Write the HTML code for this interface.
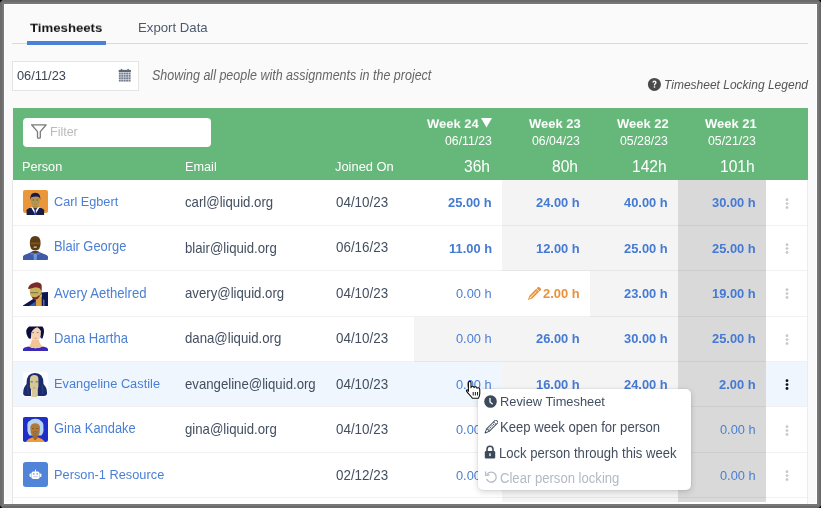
<!DOCTYPE html>
<html><head><meta charset="utf-8"><style>
html,body{margin:0;padding:0;}
body{width:821px;height:508px;overflow:hidden;position:relative;background:#6a6a6a;font-family:"Liberation Sans", sans-serif;}
.t{position:absolute;white-space:nowrap;will-change:transform;}
.r{position:absolute;}
#app{position:absolute;left:4px;top:4px;width:813px;height:500px;background:#fafafa;box-sizing:border-box;border:1px solid #fff;}
</style></head><body>
<div class="r" style="left:2px;top:2px;width:817px;height:504px;background:#777;"></div><div id="app"></div>
<div class="r" style="left:0;top:0;width:3px;height:3px;background:radial-gradient(circle at 3px 3px, transparent 2.5px, #000 3px);"></div>
<div class="r" style="right:0;top:0;width:3px;height:3px;background:radial-gradient(circle at 0 3px, transparent 2.5px, #000 3px);"></div>
<div class="r" style="left:0;bottom:0;width:3px;height:3px;background:radial-gradient(circle at 3px 0, transparent 2.5px, #000 3px);"></div>
<div class="r" style="right:0;bottom:0;width:3px;height:3px;background:radial-gradient(circle at 0 0, transparent 2.5px, #000 3px);"></div>
<div class="t" style="top:21.03px;font-size:13.2px;line-height:13.2px;color:#161616;transform:scaleY(0.93);transform-origin:0 11.17px;font-weight:700;left:30.30px;">Timesheets</div>
<div class="t" style="top:21.33px;font-size:13.2px;line-height:13.2px;color:#4b5a6e;left:138.40px;">Export Data</div>
<div class="r" style="left:12px;top:43px;width:796px;height:1px;background:#d9d9d9;"></div>
<div class="r" style="left:27px;top:41px;width:79px;height:4px;background:#4a80d8;"></div>
<div class="r" style="left:12px;top:61px;width:127px;height:30px;background:#fff;box-sizing:border-box;border:1px solid #e4e4e4;"></div>
<div class="t" style="top:69.66px;font-size:12.8px;line-height:12.8px;color:#3a4454;transform:scaleY(1.06);transform-origin:0 10.84px;left:17.00px;">06/11/23</div>
<svg class="r" style="left:118px;top:68px" width="14" height="15" viewBox="0 0 14 15"><rect x="0.7" y="1.9" width="12.2" height="2.3" fill="#5d6878"/><rect x="2.8" y="0.9" width="1.4" height="1.6" fill="#5d6878"/><rect x="9.4" y="0.9" width="1.4" height="1.6" fill="#5d6878"/><rect x="0.9" y="4.6" width="11.8" height="9.3" fill="#d3d7dd"/><rect x="0.90" y="4.70" width="1.75" height="1.6" fill="#707a8a"/><rect x="3.35" y="4.70" width="1.75" height="1.6" fill="#707a8a"/><rect x="5.80" y="4.70" width="1.75" height="1.6" fill="#707a8a"/><rect x="8.25" y="4.70" width="1.75" height="1.6" fill="#707a8a"/><rect x="10.70" y="4.70" width="1.75" height="1.6" fill="#707a8a"/><rect x="0.90" y="7.05" width="1.75" height="1.6" fill="#707a8a"/><rect x="3.35" y="7.05" width="1.75" height="1.6" fill="#707a8a"/><rect x="5.80" y="7.05" width="1.75" height="1.6" fill="#707a8a"/><rect x="8.25" y="7.05" width="1.75" height="1.6" fill="#707a8a"/><rect x="10.70" y="7.05" width="1.75" height="1.6" fill="#707a8a"/><rect x="0.90" y="9.40" width="1.75" height="1.6" fill="#707a8a"/><rect x="3.35" y="9.40" width="1.75" height="1.6" fill="#707a8a"/><rect x="5.80" y="9.40" width="1.75" height="1.6" fill="#707a8a"/><rect x="8.25" y="9.40" width="1.75" height="1.6" fill="#707a8a"/><rect x="10.70" y="9.40" width="1.75" height="1.6" fill="#707a8a"/><rect x="0.90" y="11.75" width="1.75" height="1.6" fill="#707a8a"/><rect x="3.35" y="11.75" width="1.75" height="1.6" fill="#707a8a"/><rect x="5.80" y="11.75" width="1.75" height="1.6" fill="#707a8a"/><rect x="8.25" y="11.75" width="1.75" height="1.6" fill="#707a8a"/><rect x="10.70" y="11.75" width="1.75" height="1.6" fill="#707a8a"/></svg>
<div class="t" style="top:70.02px;font-size:12.5px;line-height:12.5px;color:#666;transform:scaleY(1.1);transform-origin:0 10.58px;font-style:italic;left:151.70px;">Showing all people with assignments in the project</div>
<svg class="r" style="left:647px;top:77px" width="15" height="15" viewBox="0 0 15 15"><circle cx="7.4" cy="7.4" r="6.5" fill="#4a4a4a"/><path d="M5.3 5.6 Q5.4 3.6 7.5 3.6 Q9.6 3.7 9.6 5.5 Q9.6 6.6 8.5 7.2 Q8.1 7.5 8.1 8.4 L6.8 8.4 Q6.8 7.1 7.6 6.5 Q8.3 6 8.2 5.5 Q8.1 4.8 7.5 4.8 Q6.8 4.8 6.6 5.7 Z" fill="#fff"/><rect x="6.8" y="9.3" width="1.4" height="1.4" fill="#fff"/></svg>
<div class="t" style="top:79.14px;font-size:12px;line-height:12px;color:#555;transform:scaleY(1.08);transform-origin:0 10.16px;font-style:italic;right:12.90px;text-align:right;">Timesheet Locking Legend</div>
<div class="r" style="left:13px;top:108px;width:795px;height:72px;background:#66b77a;"></div>
<div class="r" style="left:23px;top:118px;width:188px;height:28.5px;background:#fff;border-radius:4px;"></div>
<svg class="r" style="left:30px;top:123px" width="18" height="17" viewBox="0 0 18 17"><path d="M1.6 1.8 L16.2 1.8 L10.3 8.6 L10.3 14.4 Q10.3 15.2 9.5 15.2 L8.3 15.2 Q7.5 15.2 7.5 14.4 L7.5 8.6 Z" fill="none" stroke="#7a7a7a" stroke-width="1.3" stroke-linejoin="round"/></svg>
<div class="t" style="top:125.82px;font-size:12.5px;line-height:12.5px;color:#bbbbbb;transform:scaleY(1.06);transform-origin:0 10.58px;left:49.60px;">Filter</div>
<div class="t" style="top:160.75px;font-size:12.7px;line-height:12.7px;color:#fff;transform:scaleY(1.06);transform-origin:0 10.75px;left:22.40px;">Person</div>
<div class="t" style="top:160.75px;font-size:12.7px;line-height:12.7px;color:#fff;transform:scaleY(1.06);transform-origin:0 10.75px;left:184.60px;">Email</div>
<div class="t" style="top:160.88px;font-size:12.9px;line-height:12.9px;color:#fff;transform:scaleY(1.06);transform-origin:0 10.92px;left:334.50px;">Joined On</div>
<div class="t" style="top:116.70px;font-size:13px;line-height:13px;color:#fff;transform:scaleY(0.96);transform-origin:0 11.00px;font-weight:700;right:342.70px;text-align:right;">Week 24</div>
<svg class="r" style="left:480px;top:117px" width="13" height="11" viewBox="0 0 13 11"><path d="M1 1 L12 1 L6.5 10.5 Z" fill="#fff"/></svg>
<div class="t" style="top:134.79px;font-size:12.3px;line-height:12.3px;color:#fff;transform:scaleY(1.06);transform-origin:0 10.41px;right:329.30px;text-align:right;">06/11/23</div>
<div class="t" style="top:158.79px;font-size:15.6px;line-height:15.6px;color:#fff;transform:scaleY(1.06);transform-origin:0 13.21px;right:330.50px;text-align:right;">36h</div>
<div class="t" style="top:116.70px;font-size:13px;line-height:13px;color:#fff;transform:scaleY(0.98);transform-origin:0 11.00px;font-weight:700;right:240.40px;text-align:right;">Week 23</div>
<div class="t" style="top:134.79px;font-size:12.3px;line-height:12.3px;color:#fff;transform:scaleY(1.06);transform-origin:0 10.41px;right:240.80px;text-align:right;">06/04/23</div>
<div class="t" style="top:158.79px;font-size:15.6px;line-height:15.6px;color:#fff;transform:scaleY(1.06);transform-origin:0 13.21px;right:242.50px;text-align:right;">80h</div>
<div class="t" style="top:116.70px;font-size:13px;line-height:13px;color:#fff;transform:scaleY(0.98);transform-origin:0 11.00px;font-weight:700;right:152.40px;text-align:right;">Week 22</div>
<div class="t" style="top:134.79px;font-size:12.3px;line-height:12.3px;color:#fff;transform:scaleY(1.06);transform-origin:0 10.41px;right:152.80px;text-align:right;">05/28/23</div>
<div class="t" style="top:158.79px;font-size:15.6px;line-height:15.6px;color:#fff;transform:scaleY(1.06);transform-origin:0 13.21px;right:154.50px;text-align:right;">142h</div>
<div class="t" style="top:116.70px;font-size:13px;line-height:13px;color:#fff;transform:scaleY(0.98);transform-origin:0 11.00px;font-weight:700;right:64.40px;text-align:right;">Week 21</div>
<div class="t" style="top:134.79px;font-size:12.3px;line-height:12.3px;color:#fff;transform:scaleY(1.06);transform-origin:0 10.41px;right:64.80px;text-align:right;">05/21/23</div>
<div class="t" style="top:158.79px;font-size:15.6px;line-height:15.6px;color:#fff;transform:scaleY(1.06);transform-origin:0 13.21px;right:66.50px;text-align:right;">101h</div>
<div class="r" style="left:12px;top:180px;width:796px;height:324px;background:#fff;"></div>
<div class="r" style="left:502px;top:180px;width:88px;height:46px;background:#f4f4f4;"></div>
<div class="r" style="left:590px;top:180px;width:88px;height:46px;background:#f4f4f4;"></div>
<div class="r" style="left:678px;top:180px;width:88px;height:46px;background:#d9d9d9;"></div>
<div class="r" style="left:13px;top:225px;width:795px;height:1px;background:rgba(0,0,0,0.055);"></div>
<div class="r" style="left:502px;top:226px;width:88px;height:45px;background:#f4f4f4;"></div>
<div class="r" style="left:590px;top:226px;width:88px;height:45px;background:#f4f4f4;"></div>
<div class="r" style="left:678px;top:226px;width:88px;height:45px;background:#d9d9d9;"></div>
<div class="r" style="left:13px;top:270px;width:795px;height:1px;background:rgba(0,0,0,0.055);"></div>
<div class="r" style="left:590px;top:271px;width:88px;height:46px;background:#f4f4f4;"></div>
<div class="r" style="left:678px;top:271px;width:88px;height:46px;background:#d9d9d9;"></div>
<div class="r" style="left:13px;top:316px;width:795px;height:1px;background:rgba(0,0,0,0.055);"></div>
<div class="r" style="left:414px;top:317px;width:88px;height:45px;background:#f4f4f4;"></div>
<div class="r" style="left:502px;top:317px;width:88px;height:45px;background:#f4f4f4;"></div>
<div class="r" style="left:590px;top:317px;width:88px;height:45px;background:#f4f4f4;"></div>
<div class="r" style="left:678px;top:317px;width:88px;height:45px;background:#d9d9d9;"></div>
<div class="r" style="left:13px;top:361px;width:795px;height:1px;background:rgba(0,0,0,0.055);"></div>
<div class="r" style="left:13px;top:362px;width:795px;height:44px;background:#eff6fd;"></div>
<div class="r" style="left:502px;top:362px;width:88px;height:45px;background:#f4f4f4;"></div>
<div class="r" style="left:590px;top:362px;width:88px;height:45px;background:#f4f4f4;"></div>
<div class="r" style="left:678px;top:362px;width:88px;height:45px;background:#d9d9d9;"></div>
<div class="r" style="left:13px;top:406px;width:795px;height:1px;background:rgba(0,0,0,0.055);"></div>
<div class="r" style="left:502px;top:407px;width:88px;height:46px;background:#f4f4f4;"></div>
<div class="r" style="left:590px;top:407px;width:88px;height:46px;background:#f4f4f4;"></div>
<div class="r" style="left:678px;top:407px;width:88px;height:46px;background:#d9d9d9;"></div>
<div class="r" style="left:13px;top:452px;width:795px;height:1px;background:rgba(0,0,0,0.055);"></div>
<div class="r" style="left:502px;top:453px;width:88px;height:45px;background:#f4f4f4;"></div>
<div class="r" style="left:590px;top:453px;width:88px;height:45px;background:#f4f4f4;"></div>
<div class="r" style="left:678px;top:453px;width:88px;height:45px;background:#d9d9d9;"></div>
<div class="r" style="left:13px;top:497px;width:795px;height:1px;background:rgba(0,0,0,0.055);"></div>
<div class="r" style="left:502px;top:498px;width:176px;height:4px;background:#f4f4f4;"></div>
<div class="r" style="left:678px;top:498px;width:88px;height:4px;background:#d9d9d9;"></div>
<div class="r" style="left:12px;top:180px;width:1px;height:324px;background:#e6e6e6;"></div>
<div class="r" style="left:807px;top:180px;width:1px;height:324px;background:#ececec;"></div>
<div class="t" style="top:196.15px;font-size:12.7px;line-height:12.7px;color:#4a7fd4;transform:scaleY(1.07);transform-origin:0 10.75px;left:53.80px;">Carl Egbert</div>
<div class="t" style="top:196.23px;font-size:13.2px;line-height:13.2px;color:#434f60;transform:scaleY(1.06);transform-origin:0 11.17px;left:185.00px;">carl@liquid.org</div>
<div class="t" style="top:196.06px;font-size:13.4px;line-height:13.4px;color:#434f60;transform:scaleY(1.06);transform-origin:0 11.34px;left:335.50px;">04/10/23</div>
<div class="t" style="top:197.08px;font-size:12.9px;line-height:12.9px;color:#4479d4;transform:scaleY(1.06);transform-origin:0 10.92px;font-weight:700;right:329.00px;text-align:right;">25.00 h</div>
<div class="t" style="top:197.08px;font-size:12.9px;line-height:12.9px;color:#4479d4;transform:scaleY(1.06);transform-origin:0 10.92px;font-weight:700;right:241.00px;text-align:right;">24.00 h</div>
<div class="t" style="top:197.08px;font-size:12.9px;line-height:12.9px;color:#4479d4;transform:scaleY(1.06);transform-origin:0 10.92px;font-weight:700;right:153.00px;text-align:right;">40.00 h</div>
<div class="t" style="top:197.08px;font-size:12.9px;line-height:12.9px;color:#4479d4;transform:scaleY(1.06);transform-origin:0 10.92px;font-weight:700;right:65.00px;text-align:right;">30.00 h</div>
<svg class="r" style="left:785px;top:197.6px" width="4" height="12" viewBox="0 0 4 12"><circle cx="2" cy="1.7" r="1.4" fill="#c9c9c9"/><circle cx="2" cy="5.6" r="1.4" fill="#c9c9c9"/><circle cx="2" cy="9.5" r="1.4" fill="#c9c9c9"/></svg>
<div class="t" style="top:241.40px;font-size:12.9px;line-height:12.9px;color:#4a7fd4;transform:scaleY(1.07);transform-origin:0 10.92px;left:53.80px;">Blair George</div>
<div class="t" style="top:241.65px;font-size:13.2px;line-height:13.2px;color:#434f60;transform:scaleY(1.06);transform-origin:0 11.17px;left:185.00px;">blair@liquid.org</div>
<div class="t" style="top:241.48px;font-size:13.4px;line-height:13.4px;color:#434f60;transform:scaleY(1.06);transform-origin:0 11.34px;left:335.50px;">06/16/23</div>
<div class="t" style="top:242.50px;font-size:12.9px;line-height:12.9px;color:#4479d4;transform:scaleY(1.06);transform-origin:0 10.92px;font-weight:700;right:329.00px;text-align:right;">11.00 h</div>
<div class="t" style="top:242.50px;font-size:12.9px;line-height:12.9px;color:#4479d4;transform:scaleY(1.06);transform-origin:0 10.92px;font-weight:700;right:241.00px;text-align:right;">12.00 h</div>
<div class="t" style="top:242.50px;font-size:12.9px;line-height:12.9px;color:#4479d4;transform:scaleY(1.06);transform-origin:0 10.92px;font-weight:700;right:153.00px;text-align:right;">25.00 h</div>
<div class="t" style="top:242.50px;font-size:12.9px;line-height:12.9px;color:#4479d4;transform:scaleY(1.06);transform-origin:0 10.92px;font-weight:700;right:65.00px;text-align:right;">25.00 h</div>
<svg class="r" style="left:785px;top:243.0px" width="4" height="12" viewBox="0 0 4 12"><circle cx="2" cy="1.7" r="1.4" fill="#c9c9c9"/><circle cx="2" cy="5.6" r="1.4" fill="#c9c9c9"/><circle cx="2" cy="9.5" r="1.4" fill="#c9c9c9"/></svg>
<div class="t" style="top:286.61px;font-size:13.15px;line-height:13.15px;color:#4a7fd4;transform:scaleY(1.07);transform-origin:0 11.13px;left:53.80px;">Avery Aethelred</div>
<div class="t" style="top:287.07px;font-size:13.2px;line-height:13.2px;color:#434f60;transform:scaleY(1.06);transform-origin:0 11.17px;left:185.00px;">avery@liquid.org</div>
<div class="t" style="top:286.90px;font-size:13.4px;line-height:13.4px;color:#434f60;transform:scaleY(1.06);transform-origin:0 11.34px;left:335.50px;">04/10/23</div>
<div class="t" style="top:288.00px;font-size:12.8px;line-height:12.8px;color:#4a7fd4;transform:scaleY(1.06);transform-origin:0 10.84px;right:329.00px;text-align:right;">0.00 h</div>
<div class="t" style="top:287.92px;font-size:12.9px;line-height:12.9px;color:#e8913a;transform:scaleY(1.06);transform-origin:0 10.92px;font-weight:700;right:241.00px;text-align:right;">2.00 h</div>
<div class="t" style="top:287.92px;font-size:12.9px;line-height:12.9px;color:#4479d4;transform:scaleY(1.06);transform-origin:0 10.92px;font-weight:700;right:153.00px;text-align:right;">23.00 h</div>
<div class="t" style="top:287.92px;font-size:12.9px;line-height:12.9px;color:#4479d4;transform:scaleY(1.06);transform-origin:0 10.92px;font-weight:700;right:65.00px;text-align:right;">19.00 h</div>
<svg class="r" style="left:785px;top:288.4px" width="4" height="12" viewBox="0 0 4 12"><circle cx="2" cy="1.7" r="1.4" fill="#c9c9c9"/><circle cx="2" cy="5.6" r="1.4" fill="#c9c9c9"/><circle cx="2" cy="9.5" r="1.4" fill="#c9c9c9"/></svg>
<div class="t" style="top:332.11px;font-size:13.05px;line-height:13.05px;color:#4a7fd4;transform:scaleY(1.07);transform-origin:0 11.05px;left:53.80px;">Dana Hartha</div>
<div class="t" style="top:332.49px;font-size:13.2px;line-height:13.2px;color:#434f60;transform:scaleY(1.06);transform-origin:0 11.17px;left:185.00px;">dana@liquid.org</div>
<div class="t" style="top:332.32px;font-size:13.4px;line-height:13.4px;color:#434f60;transform:scaleY(1.06);transform-origin:0 11.34px;left:335.50px;">04/10/23</div>
<div class="t" style="top:333.42px;font-size:12.8px;line-height:12.8px;color:#4a7fd4;transform:scaleY(1.06);transform-origin:0 10.84px;right:329.00px;text-align:right;">0.00 h</div>
<div class="t" style="top:333.34px;font-size:12.9px;line-height:12.9px;color:#4479d4;transform:scaleY(1.06);transform-origin:0 10.92px;font-weight:700;right:241.00px;text-align:right;">26.00 h</div>
<div class="t" style="top:333.34px;font-size:12.9px;line-height:12.9px;color:#4479d4;transform:scaleY(1.06);transform-origin:0 10.92px;font-weight:700;right:153.00px;text-align:right;">30.00 h</div>
<div class="t" style="top:333.34px;font-size:12.9px;line-height:12.9px;color:#4479d4;transform:scaleY(1.06);transform-origin:0 10.92px;font-weight:700;right:65.00px;text-align:right;">25.00 h</div>
<svg class="r" style="left:785px;top:333.9px" width="4" height="12" viewBox="0 0 4 12"><circle cx="2" cy="1.7" r="1.4" fill="#c9c9c9"/><circle cx="2" cy="5.6" r="1.4" fill="#c9c9c9"/><circle cx="2" cy="9.5" r="1.4" fill="#c9c9c9"/></svg>
<div class="t" style="top:377.74px;font-size:12.8px;line-height:12.8px;color:#4a7fd4;transform:scaleY(1.07);transform-origin:0 10.84px;left:53.80px;">Evangeline Castile</div>
<div class="t" style="top:377.91px;font-size:13.2px;line-height:13.2px;color:#434f60;transform:scaleY(1.06);transform-origin:0 11.17px;left:185.00px;">evangeline@liquid.org</div>
<div class="t" style="top:377.74px;font-size:13.4px;line-height:13.4px;color:#434f60;transform:scaleY(1.06);transform-origin:0 11.34px;left:335.50px;">04/10/23</div>
<div class="t" style="top:378.84px;font-size:12.8px;line-height:12.8px;color:#4a7fd4;transform:scaleY(1.06);transform-origin:0 10.84px;right:329.00px;text-align:right;">0.00 h</div>
<div class="t" style="top:378.76px;font-size:12.9px;line-height:12.9px;color:#4479d4;transform:scaleY(1.06);transform-origin:0 10.92px;font-weight:700;right:241.00px;text-align:right;">16.00 h</div>
<div class="t" style="top:378.76px;font-size:12.9px;line-height:12.9px;color:#4479d4;transform:scaleY(1.06);transform-origin:0 10.92px;font-weight:700;right:153.00px;text-align:right;">24.00 h</div>
<div class="t" style="top:378.76px;font-size:12.9px;line-height:12.9px;color:#4479d4;transform:scaleY(1.06);transform-origin:0 10.92px;font-weight:700;right:65.00px;text-align:right;">2.00 h</div>
<svg class="r" style="left:785px;top:379.3px" width="4" height="12" viewBox="0 0 4 12"><circle cx="2" cy="1.7" r="1.4" fill="#111"/><circle cx="2" cy="5.6" r="1.4" fill="#111"/><circle cx="2" cy="9.5" r="1.4" fill="#111"/></svg>
<div class="t" style="top:423.08px;font-size:12.9px;line-height:12.9px;color:#4a7fd4;transform:scaleY(1.07);transform-origin:0 10.92px;left:53.80px;">Gina Kandake</div>
<div class="t" style="top:423.33px;font-size:13.2px;line-height:13.2px;color:#434f60;transform:scaleY(1.06);transform-origin:0 11.17px;left:185.00px;">gina@liquid.org</div>
<div class="t" style="top:423.16px;font-size:13.4px;line-height:13.4px;color:#434f60;transform:scaleY(1.06);transform-origin:0 11.34px;left:335.50px;">04/10/23</div>
<div class="t" style="top:424.26px;font-size:12.8px;line-height:12.8px;color:#4a7fd4;transform:scaleY(1.06);transform-origin:0 10.84px;right:329.00px;text-align:right;">0.00 h</div>
<div class="t" style="top:424.26px;font-size:12.8px;line-height:12.8px;color:#4a7fd4;transform:scaleY(1.06);transform-origin:0 10.84px;right:65.00px;text-align:right;">0.00 h</div>
<svg class="r" style="left:785px;top:424.7px" width="4" height="12" viewBox="0 0 4 12"><circle cx="2" cy="1.7" r="1.4" fill="#c9c9c9"/><circle cx="2" cy="5.6" r="1.4" fill="#c9c9c9"/><circle cx="2" cy="9.5" r="1.4" fill="#c9c9c9"/></svg>
<div class="t" style="top:468.58px;font-size:12.8px;line-height:12.8px;color:#4a7fd4;transform:scaleY(1.07);transform-origin:0 10.84px;left:53.80px;">Person-1 Resource</div>
<div class="t" style="top:468.58px;font-size:13.4px;line-height:13.4px;color:#434f60;transform:scaleY(1.06);transform-origin:0 11.34px;left:335.50px;">02/12/23</div>
<div class="t" style="top:469.68px;font-size:12.8px;line-height:12.8px;color:#4a7fd4;transform:scaleY(1.06);transform-origin:0 10.84px;right:329.00px;text-align:right;">0.00 h</div>
<div class="t" style="top:469.68px;font-size:12.8px;line-height:12.8px;color:#4a7fd4;transform:scaleY(1.06);transform-origin:0 10.84px;right:65.00px;text-align:right;">0.00 h</div>
<svg class="r" style="left:785px;top:470.1px" width="4" height="12" viewBox="0 0 4 12"><circle cx="2" cy="1.7" r="1.4" fill="#c9c9c9"/><circle cx="2" cy="5.6" r="1.4" fill="#c9c9c9"/><circle cx="2" cy="9.5" r="1.4" fill="#c9c9c9"/></svg>
<svg class="r" style="left:526.9px;top:286.8px" width="14" height="14" viewBox="0 0 14 14"><g transform="rotate(-45 7 7)"><path d="M-1.6 7 L2.6 4.9 L2.6 9.1 Z" fill="#e8913a"/><path d="M0.6 7 L2.6 6 L2.6 8 Z" fill="#fff"/><rect x="2.6" y="4.9" width="9.6" height="4.2" fill="#e8913a"/><rect x="3.2" y="6.55" width="8.4" height="0.9" fill="#fff"/><rect x="5.2" y="6.5" width="0.8" height="1" fill="#e8913a"/><rect x="7.6" y="6.5" width="0.8" height="1" fill="#e8913a"/><rect x="10" y="6.5" width="0.8" height="1" fill="#e8913a"/><rect x="12.8" y="4.9" width="2.8" height="4.2" rx="0.6" fill="#e8913a"/></g></svg>
<svg class="r" style="left:23px;top:189.9px" width="25" height="25" viewBox="0 0 25 25"><rect x="0" y="0" width="25" height="23" rx="2" fill="#e9973a"/><path d="M3.6 25 L3.6 20.2 Q3.9 18.6 6.5 17.9 L18.2 17.9 Q20.8 18.6 21.1 20.2 L21.1 25 Z" fill="#161c48"/><path d="M9.2 15.8 L15.6 15.8 L15.6 18.3 L9.2 18.3 Z" fill="#a88848"/><path d="M8 17.3 L12.3 24.5 L16.6 17.3 L15 17.3 L12.3 21 L9.6 17.3 Z" fill="#fff"/><path d="M11.7 19.6 L13 19.6 L13.3 25 L11.4 25 Z" fill="#2a46d8"/><ellipse cx="12.3" cy="10.8" rx="4.4" ry="6" fill="#b3944f"/><path d="M7.4 10 Q6.6 2.8 12.3 2.7 Q18 2.8 17.2 10 L16.5 7.4 Q14 5.8 8.3 7.2 Z" fill="#151b48"/><rect x="9.4" y="9.6" width="1.8" height="0.8" fill="#5b4c78"/><rect x="13.5" y="9.6" width="1.8" height="0.8" fill="#5b4c78"/><rect x="11.5" y="13.8" width="1.6" height="0.7" fill="#c27a3c"/></svg>
<svg class="r" style="left:23px;top:235.3px" width="25" height="25" viewBox="0 0 25 25"><path d="M-0.2 24 L-0.2 21.6 Q0.5 19.8 5 18.4 L9.5 16.6 L15 16.6 L19.8 18.4 Q24.5 19.8 25 21.6 L25 24 Q25 25 24 25 L0.8 25 Q-0.2 25 -0.2 24 Z" fill="#3e5aa8"/><path d="M8.5 16.8 L12.3 19.5 L16 16.8 L14 16 L10.5 16 Z" fill="#5a3d14"/><path d="M10.3 18.6 L14.2 18.6 L13.6 25 L10.9 25 Z" fill="#6a9ad8"/><path d="M7 18.2 L10.3 17.4 L11 19.5 L8.5 20 Z M17.6 18.2 L14.2 17.4 L13.5 19.5 L16 20 Z" fill="#5874c0"/><path d="M6.8 8 Q6.8 1 12.2 1 Q17.6 1 17.6 8 Q17.6 15.5 12.2 15.6 Q6.8 15.5 6.8 8 Z" fill="#5a3d14"/><rect x="7.4" y="7.6" width="9.6" height="1.6" rx="0.8" fill="#8a5a20" opacity="0.8"/><rect x="10.6" y="11.5" width="3.2" height="1.2" rx="0.5" fill="#e8c8d8"/></svg>
<svg class="r" style="left:23px;top:280.7px" width="25" height="25" viewBox="0 0 25 25"><path d="M12.8 25 L13.2 16 L19.6 15.6 L19.6 25 Z" fill="#d8a040"/><path d="M18.7 25 L18.7 11.6 Q19.5 11.1 25 11.1 L25 25 Z" fill="#0e1650"/><rect x="20" y="18.5" width="1.5" height="6.5" fill="#4a6ab8"/><path d="M0 24.5 L12.8 16.2 L13 25 L0 25 Z" fill="#0e1650"/><path d="M6 25 L12.8 20.2 L12.8 25 Z" fill="#3f5aa8"/><path d="M6.7 9 Q6.8 6.5 12 6.3 Q18.7 6.5 18.7 9.5 L18.7 14 Q17 18.5 12 18.8 Q9 18 7.2 14.1 Z" fill="#c9b25e"/><path d="M5.1 7.2 Q6 3.5 10 2.2 Q12.5 1.2 14.4 1.3 Q18.7 2 18.7 5 L18.7 10 L16.6 7.2 Q14.5 6.3 12 6.6 Q8.5 7.1 5.7 8.2 Z" fill="#7a2a2a"/><path d="M8.7 15.7 Q10 18.8 11.8 19.1 Q15 18.8 16.5 15.8 L18.7 10.5 L18.7 13 Q17.5 14.8 15.9 14.3 Q13.5 16.5 12.3 16.2 Q10.5 16 8.7 15.7 Z" fill="#7a2a2a"/><rect x="7.4" y="11.3" width="7.6" height="0.9" fill="#4a4a30" opacity="0.75"/></svg>
<svg class="r" style="left:23px;top:326.1px" width="25" height="25" viewBox="0 0 25 25"><path d="M0 25 L0 23 Q0.5 21 5.6 20.4 Q12.3 24 19.8 20.4 Q24.5 21 25 23 L25 25 Z" fill="#3a2ab8"/><path d="M8.7 13.5 L15.9 13.5 Q16.5 18.5 19.8 20.4 Q12.3 24 5.6 20.4 Q8.3 18.5 8.7 13.5 Z" fill="#f2c496"/><path d="M7.7 6 Q7.7 0.8 12.8 0.8 Q17.9 0.8 17.9 6 L17.9 9.5 Q17.4 14.3 12.5 14.3 Q8.2 14 7.7 9.5 Z" fill="#f4d2b4"/><path d="M6.2 0.4 L19.5 0.4 Q21.3 2.5 21 6 Q20.6 9.5 19.6 12.2 Q18.2 12.8 17.6 11.5 L17.9 5 Q16.5 2.3 14.4 1.2 Q10 2.5 8.3 6.5 L7.8 12.7 Q5.5 13.2 4.8 11 Q3 8 3.2 4.5 Q4.2 1.5 6.2 0.4 Z" fill="#0c0c3a"/><rect x="9.2" y="6.3" width="1.8" height="0.8" fill="#6a6070"/><rect x="13.8" y="6.3" width="1.8" height="0.8" fill="#6a6070"/><rect x="11.4" y="11.8" width="2.5" height="0.8" fill="#e89068"/><circle cx="17.9" cy="10.8" r="0.7" fill="#4a3ab8"/></svg>
<svg class="r" style="left:23px;top:371.5px" width="25" height="25" viewBox="0 0 25 25"><rect x="-0.2" y="0" width="25.2" height="25" rx="2" fill="#fafcff"/><path d="M3.6 12 Q3.2 1 12 1 Q20.8 1 20.4 12 Q24.5 16 24 22 Q23.5 24 21 24 L14.6 24 L14.6 8 L8 8 L8 24 L3 24 Q0.5 24 0.2 22 Q-0.2 16 3.6 12 Z" fill="#1b2a6a"/><path d="M5 13 Q4 18 5.5 22 M19 13 Q20.5 18 19.5 22" fill="none" stroke="#3a4e9a" stroke-width="0.6"/><path d="M6.9 7 Q7.2 3.1 11.2 3.1 Q15.4 3.1 15.4 7 L15.4 14.5 Q14.8 19 11.2 19 Q7.5 19 6.9 14.5 Z" fill="#d8c898"/><path d="M8.8 17 L13.6 17 L14.2 25 L8.4 25 Z" fill="#d8c898"/><rect x="7.6" y="9.4" width="2.2" height="0.9" fill="#4a5080"/><rect x="12.6" y="9.4" width="2.2" height="0.9" fill="#4a5080"/><rect x="10" y="15.5" width="2.6" height="0.8" fill="#b89860"/></svg>
<svg class="r" style="left:23px;top:416.9px" width="25" height="25" viewBox="0 0 25 25"><rect x="-0.2" y="0" width="25.2" height="25" rx="2.5" fill="#1f2ec8"/><path d="M4.5 10.5 Q3.6 5 7 3.8 Q8.5 1.6 12.3 1.7 Q16.5 1.6 18 4 Q21 5.5 20.4 10.5 Q21.2 15 18.4 18.6 L6.5 18.6 Q3.8 15 4.5 10.5 Z" fill="#b8d4f4"/><path d="M7.3 10 Q8 6.2 12.2 6.2 Q16.4 6.2 17 10 L16.6 16 Q15.2 20 12.2 20 Q9.2 20 7.8 16 Z" fill="#b07a36"/><path d="M2.5 25 Q5 21.5 9.6 20.2 L12.2 23.2 L14.8 20.2 Q19.4 21.5 22.2 25 Z" fill="#f09a3a"/><path d="M9.8 17.5 L14.6 17.5 L14.8 20.2 L12.2 23.2 L9.6 20.2 Z" fill="#a06c2c"/><rect x="10.5" y="14.4" width="3.6" height="1.8" rx="0.7" fill="#5a3a1a"/><rect x="11" y="14.8" width="2.6" height="0.8" fill="#b8b8b0"/><rect x="9" y="11" width="2" height="0.7" fill="#7a4a20"/><rect x="13.3" y="11" width="2" height="0.7" fill="#7a4a20"/></svg>
<svg class="r" style="left:23px;top:462.3px" width="25" height="25" viewBox="0 0 25 25"><rect x="-0.2" y="0" width="25.2" height="25" rx="3" fill="#4f84d8"/><rect x="8.4" y="9.6" width="8.2" height="7.4" rx="1.8" fill="#fff"/><rect x="6.6" y="11.6" width="1.6" height="3.4" rx="0.7" fill="#fff"/><rect x="16.8" y="11.6" width="1.6" height="3.4" rx="0.7" fill="#fff"/><rect x="12" y="7.6" width="1" height="2.4" rx="0.4" fill="#fff"/><circle cx="10.8" cy="12" r="0.75" fill="#4f84d8"/><circle cx="14.2" cy="12" r="0.75" fill="#4f84d8"/><rect x="10.2" y="14.5" width="4.6" height="0.6" fill="#8fb2e6"/></svg>
<div class="r" style="left:478px;top:389px;width:213px;height:101px;background:#fff;border-radius:5px;box-shadow:0 2px 6px rgba(0,0,0,0.16), 0 0 0 1px rgba(0,0,0,0.04);"></div>
<div class="t" style="top:396.42px;font-size:12.85px;line-height:12.85px;color:#434f60;transform:scaleY(1.06);transform-origin:0 10.88px;left:500.00px;">Review Timesheet</div>
<div class="t" style="top:421.11px;font-size:13.1px;line-height:13.1px;color:#434f60;transform:scaleY(1.06);transform-origin:0 11.09px;left:500.00px;">Keep week open for person</div>
<div class="t" style="top:446.51px;font-size:13.1px;line-height:13.1px;color:#434f60;transform:scaleY(1.06);transform-origin:0 11.09px;left:498.50px;">Lock person through this week</div>
<div class="t" style="top:471.71px;font-size:13.1px;line-height:13.1px;color:#b3bac4;transform:scaleY(1.06);transform-origin:0 11.09px;left:500.00px;">Clear person locking</div>
<svg class="r" style="left:484px;top:395px" width="13" height="13" viewBox="0 0 13 13"><circle cx="6.5" cy="6.5" r="6.3" fill="#3c4a5c"/><path d="M6 3 L6 7 L8.6 9.3" fill="none" stroke="#fff" stroke-width="1.3"/></svg>
<svg class="r" style="left:484px;top:419.6px" width="14" height="14" viewBox="0 0 14 14"><g transform="rotate(-45 7 7)" fill="none" stroke="#3c4a5c" stroke-width="0.95" stroke-linejoin="round"><path d="M-1.4 7 L2.6 5.2 L12.6 5.2 L15.2 5.2 Q15.6 5.2 15.6 5.6 L15.6 8.4 Q15.6 8.8 15.2 8.8 L2.6 8.8 Z"/><path d="M12.4 5.2 L12.4 8.8 M2.6 5.2 L2.6 8.8 M3.4 7 L11.6 7" stroke-dasharray="1.4 0.8"/></g></svg>
<svg class="r" style="left:483.8px;top:445px" width="12" height="14" viewBox="0 0 12 14"><path d="M3 6 L3 4.2 Q3 1.2 6 1.2 Q9 1.2 9 4.2 L9 6" fill="none" stroke="#3c4a5c" stroke-width="1.6"/><rect x="0.8" y="6" width="10.4" height="7.5" rx="1.2" fill="#3c4a5c"/><rect x="5.3" y="8.3" width="1.4" height="2.8" fill="#fff"/></svg>
<svg class="r" style="left:484px;top:470px" width="14" height="14" viewBox="0 0 14 14"><path d="M3.2 4.2 A5 5 0 1 1 2.6 9" fill="none" stroke="#b3bac4" stroke-width="1.3"/><path d="M1.5 1.5 L1.8 5.5 L5.6 4.8" fill="none" stroke="#b3bac4" stroke-width="1.3"/></svg>
<svg class="r" style="left:465.4px;top:380.4px" width="18" height="20" viewBox="0 0 15.6 17.3"><path d="M3 9.8 L3 2.6 Q3 1.2 4.1 1.2 Q5.2 1.2 5.2 2.6 L5.2 6.6 Q5.4 5.4 6.6 5.4 Q7.8 5.4 7.9 6.6 Q8.2 5.8 9.2 5.9 Q10.3 6 10.4 7.1 Q10.8 6.5 11.7 6.7 Q12.8 7 12.8 8.4 L12.8 11.6 Q12.8 13.8 11.6 15.8 L6.4 15.8 Q5.4 14.2 3.8 12.6 Q2.2 11.2 1.4 9.8 Q1 8.6 2 8.5 Q2.6 8.5 3 9.8 Z" fill="#fff" stroke="#111" stroke-width="0.95" stroke-linejoin="round"/><path d="M7.1 10.4 L7.1 13.4 M9 10.4 L9 13.4 M10.9 10.4 L10.9 13.4" stroke="#111" stroke-width="0.85"/></svg>
</body></html>
